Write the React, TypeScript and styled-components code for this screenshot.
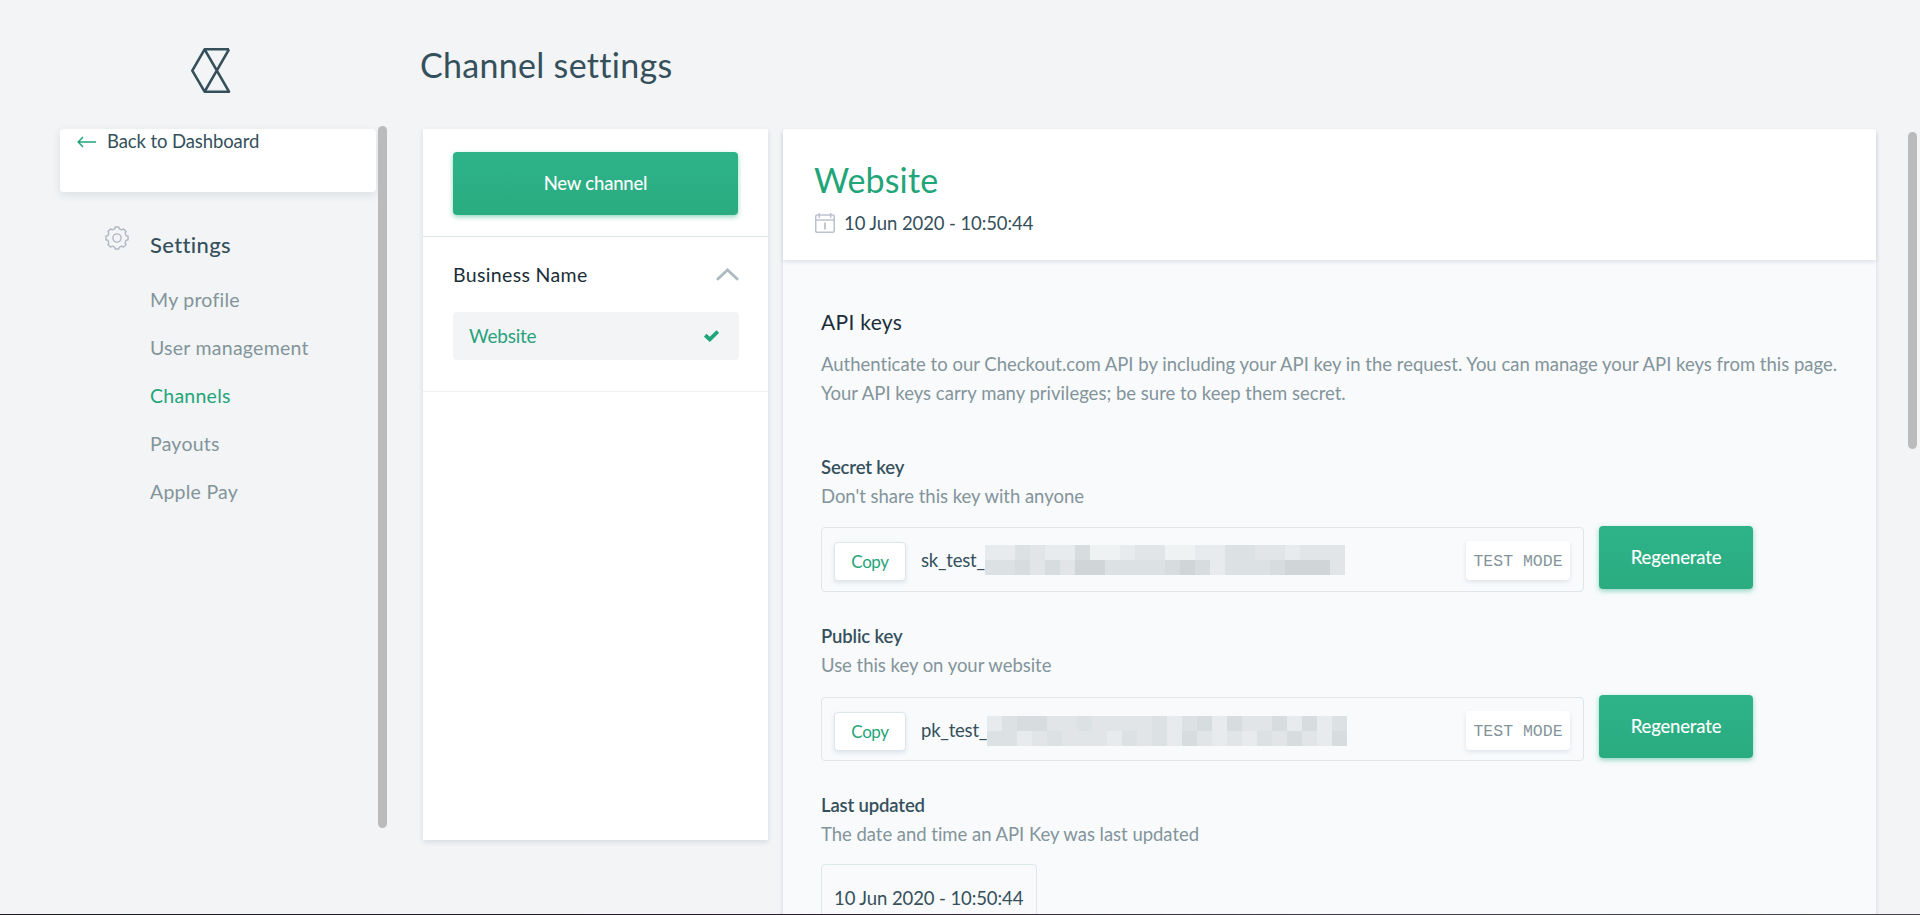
import React from 'react';
import styled, { createGlobalStyle } from 'styled-components';

const GlobalStyle = createGlobalStyle`
  *, *::before, *::after { box-sizing: border-box; }
  body {
    margin: 0;
    background: #f2f4f6;
    font-family: Lato, "Open Sans", sans-serif;
    font-variant-ligatures: none;
    color: #35505b;
  }
  h1, h2, h3, p { margin: 0; font-weight: 400; }
  button { font-family: inherit; border: 0; padding: 0; }
`;

const Page = styled.div`
  display: flex;
  height: 100vh;
  overflow: hidden;
  border-bottom: 1px solid;
  border-image: linear-gradient(90deg, #1c1c20, #2c1c31 40%, #443c47 70%, #4a474c) 1;
`;

const Sidebar = styled.aside`
  flex: none;
  width: 378px;
  display: flex;
  flex-direction: column;
  padding-left: 60px;
`;

const LogoArea = styled.div`
  height: 129px;
  padding: 48px 0 0 131px;
  svg { display: block; }
`;

const BackCard = styled.a`
  display: flex;
  align-items: flex-start;
  gap: 11px;
  width: 316px;
  height: 63px;
  padding: 0 17px;
  border-radius: 4px;
  background: #fff;
  box-shadow: 0 3px 8px rgba(53, 80, 100, 0.12);
  font-size: 18.5px;
  line-height: 24px;
  letter-spacing: -0.1px;
  svg { margin-top: 7px; }
`;

const NavHeading = styled.div`
  display: flex;
  align-items: flex-start;
  gap: 21px;
  margin: 34px 0 0 45px;
  svg { display: block; }
`;

const NavTitle = styled.h2`
  margin-top: 5px;
  font-size: 22px;
  font-weight: 500;
  line-height: 28px;
  letter-spacing: 0.35px;
  color: #35505b;
`;

const NavList = styled.nav`
  display: flex;
  flex-direction: column;
  margin: 17px 0 0 90px;
`;

const NavItem = styled.a<{ $active?: boolean }>`
  height: 48px;
  line-height: 48px;
  font-size: 19.5px;
  letter-spacing: 0.25px;
  color: ${p => (p.$active ? '#1fa578' : '#83949a')};
`;

const ScrollThumb = styled.div<{ $top: number; $height: number; $width: number }>`
  flex: none;
  width: ${p => p.$width}px;
  height: ${p => p.$height}px;
  margin-top: ${p => p.$top}px;
  border-radius: 5px;
  background: #bbb;
`;

const Main = styled.main`
  flex: none;
  width: 1489px;
  display: flex;
  flex-direction: column;
  padding-left: 36px;
  margin-right: 32px;
`;

const PageTitle = styled.h1`
  flex: none;
  height: 129px;
  padding: 44px 0 0;
  margin-left: -3px;
  font-size: 34px;
  line-height: 42px;
  letter-spacing: 0.3px;
`;

const Columns = styled.div`
  flex: 1;
  min-height: 0;
  display: flex;
  gap: 15px;
`;

const ChannelPanel = styled.section`
  flex: none;
  width: 345px;
  height: 711px;
  background: #fff;
  box-shadow: 0 2px 5px rgba(53, 80, 110, 0.15);
`;

const NewChannelArea = styled.div`
  height: 108px;
  padding: 23px 30px 0;
  border-bottom: 1px solid #dfe6ea;
`;

const PrimaryButton = styled.button<{ $width: number }>`
  flex: none;
  display: block;
  width: ${p => p.$width}px;
  height: 63px;
  padding-bottom: 2px;
  border-radius: 4px;
  background: linear-gradient(#2eb388, #2aab80);
  box-shadow: 0 2px 5px rgba(42, 175, 131, 0.5);
  color: #fff;
  font-size: 18.5px;
  font-weight: 500;
  letter-spacing: -0.2px;
`;

const ChannelGroup = styled.div`
  height: 155px;
  padding: 23px 29px 0 30px;
  border-bottom: 1px solid #eff2f4;
`;

const GroupHeader = styled.div`
  display: flex;
  justify-content: space-between;
  align-items: center;
  height: 28px;
  margin-bottom: 24px;
  font-size: 19.5px;
  letter-spacing: 0.35px;
  color: #1b2e38;
`;

const ChannelItem = styled.div`
  display: flex;
  justify-content: space-between;
  align-items: center;
  height: 48px;
  padding: 0 20px 1px 16px;
  border-radius: 4px;
  background: #f2f4f6;
  font-size: 19px;
  letter-spacing: -0.2px;
  color: #29a27b;
`;

const DetailPanel = styled.section`
  flex: none;
  width: 1093px;
  border-radius: 4px 4px 0 0;
  background: #f8fafc;
  box-shadow: 0 3px 4px rgba(53, 80, 110, 0.16);
`;

const DetailHeader = styled.header`
  height: 131px;
  padding: 30px 31px 0;
  border-radius: 3px 3px 0 0;
  background: #fff;
  box-shadow: 0 2px 4px rgba(53, 80, 110, 0.14);
`;

const ChannelName = styled.h2`
  font-size: 34px;
  line-height: 42px;
  letter-spacing: 0.15px;
  color: #1fa578;
`;

const CreatedAt = styled.div`
  display: flex;
  align-items: center;
  gap: 9px;
  height: 24px;
  margin: 10px 0 0 1px;
  font-size: 18.5px;
  letter-spacing: -0.1px;
`;

const DetailBody = styled.div`
  padding: 48px 38px 0 38px;
`;

const SectionTitle = styled.h3`
  font-size: 21px;
  line-height: 28px;
  letter-spacing: 0.3px;
  color: #1b2e38;
`;

const Intro = styled.p`
  margin-top: 14px;
  font-size: 18.5px;
  line-height: 29px;
  white-space: nowrap;
  color: #83949a;
`;

const Field = styled.div<{ $gap: number }>`
  margin-top: ${p => p.$gap}px;
`;

const FieldLabel = styled.h3`
  font-size: 18.5px;
  font-weight: 600;
  line-height: 29px;
  letter-spacing: -0.15px;
`;

const FieldHint = styled.p`
  font-size: 18.5px;
  line-height: 29px;
  letter-spacing: -0.03px;
  color: #83949a;
`;

const FieldRow = styled.div`
  display: flex;
  align-items: flex-start;
  gap: 15px;
  height: 66px;
  margin-top: 15px;
`;

const KeyBox = styled.div<{ $top: number }>`
  display: flex;
  align-items: flex-start;
  width: 763px;
  height: ${p => 66 - p.$top}px;
  margin-top: ${p => p.$top}px;
  padding: 0 13px 0 12px;
  border: 1px solid #dfe5e8;
  border-radius: 4px;
`;

const CopyButton = styled.button`
  width: 72px;
  height: 39px;
  margin: 14px 15px 0 0;
  border: 1px solid #dfe6ea;
  border-radius: 4px;
  background: #fff;
  box-shadow: 0 2px 4px rgba(53, 80, 110, 0.12);
  font-size: 17px;
  letter-spacing: -0.4px;
  color: #1fa578;
`;

const KeyPrefix = styled.span`
  margin-top: 20px;
  font-size: 18.5px;
  line-height: 24px;
  letter-spacing: -0.2px;
`;

const Redacted = styled.div<{ $top: number }>`
  display: grid;
  grid-template-columns: repeat(24, 15px);
  grid-auto-rows: 15px;
  margin-top: ${p => p.$top}px;
`;

const RedactedCell = styled.i<{ $shade: number }>`
  background: ${p => ['#eef2f2', '#e7ebee', '#e2e5e8', '#dce1e3', '#d7dcde', '#d0d6d8'][p.$shade]};
`;

const ModeBadge = styled.span`
  width: 104px;
  height: 39px;
  margin: 13px 0 0 auto;
  border-radius: 4px;
  background: #fff;
  box-shadow: 0 2px 4px rgba(53, 80, 110, 0.12);
  font-family: "Liberation Mono", monospace;
  font-size: 16.5px;
  line-height: 41px;
  text-align: center;
  white-space: nowrap;
  color: #83949a;
`;

const DateBox = styled.div`
  width: 216px;
  height: 64px;
  margin-top: 15px;
  padding-left: 12px;
  border: 1px solid #dfe8ea;
  border-radius: 4px;
  font-size: 18.5px;
  line-height: 66px;
  letter-spacing: -0.1px;
  white-space: nowrap;
`;

const Logo = () => (
  <svg width="40" height="46" viewBox="0 0 40 46" fill="none" stroke="#35505b" strokeWidth="2.6" strokeLinejoin="round">
    <path d="M38 1.3H13.6L1.3 22.6L13.6 43.7H38L13.6 1.3M13.6 43.7L38 1.3" />
  </svg>
);

const ArrowLeft = () => (
  <svg width="19" height="12" viewBox="0 0 19 12" fill="none" stroke="#1fa578" strokeWidth="1.5">
    <path d="M19 6H1.5M6 1L1.2 6L6 11" />
  </svg>
);

const gearPoint = (radius: number, degrees: number) => {
  const a = (degrees * Math.PI) / 180;
  return `${(12 + radius * Math.sin(a)).toFixed(2)} ${(12 - radius * Math.cos(a)).toFixed(2)}`;
};

const GEAR_OUTLINE =
  'M' +
  Array.from({ length: 8 }, (_, i) => i * 45)
    .flatMap(a => [gearPoint(11.2, a - 9), gearPoint(11.2, a + 9), gearPoint(9.4, a + 15), gearPoint(9.4, a + 30)])
    .join('L') +
  'Z';

const Gear = () => (
  <svg width="24" height="24" viewBox="0 0 24 24" fill="none" stroke="#b0b7c5" strokeWidth="1.4" strokeLinejoin="round">
    <circle cx="12" cy="12" r="4.1" />
    <path d={GEAR_OUTLINE} />
  </svg>
);

const ChevronUp = () => (
  <svg width="23" height="13" viewBox="0 0 23 13" fill="none" stroke="#adbbc1" strokeWidth="2.8">
    <path d="M1 11.8L11.5 2L22 11.8" />
  </svg>
);

const Check = () => (
  <svg width="15" height="12" viewBox="0 0 15 12" fill="none" stroke="#1fa578" strokeWidth="3.8">
    <path d="M1.2 5.2L5.8 9.4L13.8 1.6" />
  </svg>
);

const Calendar = () => (
  <svg width="20" height="20" viewBox="0 0 20 20" fill="none" stroke="#bcc2cf" strokeWidth="1.5">
    <rect x=".75" y="2" width="18.5" height="17.2" rx="1.2" />
    <path d="M.7 7H19.3M4.3 0V5M15.7 0V5" />
    <path d="M10 9.5V16.5" strokeWidth="1.8" />
  </svg>
);

const SECRET_SHADES = '113211400122001133221222' + '334242553333454133345552';
const PUBLIC_SHADES = '134422322223134142241413' + '331232221323142121324214';

type KeyFieldProps = {
  label: string;
  hint: string;
  prefix: string;
  shades: string;
  gap: number;
  boxTop: number;
  shadesTop: number;
};

const KeyField = ({ label, hint, prefix, shades, gap, boxTop, shadesTop }: KeyFieldProps) => (
  <Field $gap={gap}>
    <FieldLabel>{label}</FieldLabel>
    <FieldHint>{hint}</FieldHint>
    <FieldRow>
      <KeyBox $top={boxTop}>
        <CopyButton>Copy</CopyButton>
        <KeyPrefix>{prefix}</KeyPrefix>
        <Redacted $top={shadesTop}>
          {[...shades].map((s, i) => <RedactedCell key={i} $shade={Number(s)} />)}
        </Redacted>
        <ModeBadge>TEST MODE</ModeBadge>
      </KeyBox>
      <PrimaryButton $width={154}>Regenerate</PrimaryButton>
    </FieldRow>
  </Field>
);

const NAV = ['My profile', 'User management', 'Channels', 'Payouts', 'Apple Pay'];

export default function App() {
  return (
    <>
      <GlobalStyle />
      <Page>
        <Sidebar>
          <LogoArea><Logo /></LogoArea>
          <BackCard><ArrowLeft />Back to Dashboard</BackCard>
          <NavHeading>
            <Gear />
            <NavTitle>Settings</NavTitle>
          </NavHeading>
          <NavList>
            {NAV.map(n => <NavItem key={n} $active={n === 'Channels'}>{n}</NavItem>)}
          </NavList>
        </Sidebar>
        <ScrollThumb $top={126} $height={702} $width={9} />
        <Main>
          <PageTitle>Channel settings</PageTitle>
          <Columns>
            <ChannelPanel>
              <NewChannelArea>
                <PrimaryButton $width={285}>New channel</PrimaryButton>
              </NewChannelArea>
              <ChannelGroup>
                <GroupHeader>Business Name<ChevronUp /></GroupHeader>
                <ChannelItem>Website<Check /></ChannelItem>
              </ChannelGroup>
            </ChannelPanel>
            <DetailPanel>
              <DetailHeader>
                <ChannelName>Website</ChannelName>
                <CreatedAt><Calendar />10 Jun 2020 - 10:50:44</CreatedAt>
              </DetailHeader>
              <DetailBody>
                <SectionTitle>API keys</SectionTitle>
                <Intro>
                  Authenticate to our Checkout.com API by including your API key in the request. You can manage your API keys from this page.
                  <br />
                  Your API keys carry many privileges; be sure to keep them secret.
                </Intro>
                <KeyField
                  gap={45}
                  boxTop={1}
                  shadesTop={17}
                  label="Secret key"
                  hint="Don't share this key with anyone"
                  prefix="sk_test_"
                  shades={SECRET_SHADES}
                />
                <KeyField
                  gap={30}
                  boxTop={2}
                  shadesTop={18}
                  label="Public key"
                  hint="Use this key on your website"
                  prefix="pk_test_"
                  shades={PUBLIC_SHADES}
                />
                <Field $gap={30}>
                  <FieldLabel>Last updated</FieldLabel>
                  <FieldHint>The date and time an API Key was last updated</FieldHint>
                  <DateBox>10 Jun 2020 - 10:50:44</DateBox>
                </Field>
              </DetailBody>
            </DetailPanel>
          </Columns>
        </Main>
        <ScrollThumb $top={132} $height={317} $width={9} />
      </Page>
    </>
  );
}
